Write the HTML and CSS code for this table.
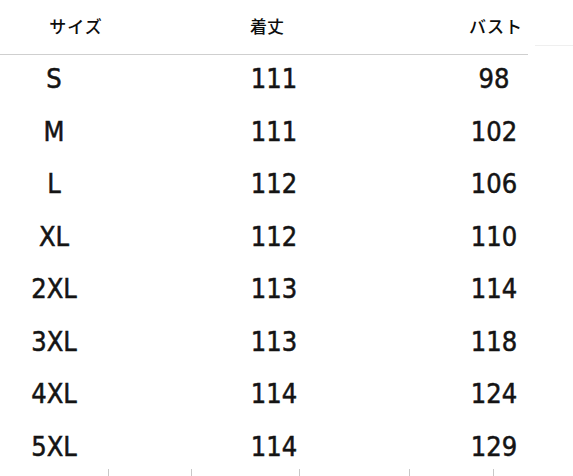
FILE: index.html
```html
<!DOCTYPE html>
<html lang="ja">
<head>
<meta charset="utf-8">
<link rel="stylesheet" href="styles.css">
</head>
<body>
<div class="sheet">
  <div class="head">
    <div class="hcell h1 kana">サイズ</div>
    <div class="hcell h2">着丈</div>
    <div class="hcell h3 kana">バスト</div>
  </div>
  <div class="head-fade"></div>
  <div class="rows">
    <div class="row"><span>S</span><span>111</span><span>98</span></div>
    <div class="row"><span>M</span><span>111</span><span>102</span></div>
    <div class="row"><span>L</span><span>112</span><span>106</span></div>
    <div class="row"><span>XL</span><span>112</span><span>110</span></div>
    <div class="row"><span>2XL</span><span>113</span><span>114</span></div>
    <div class="row"><span>3XL</span><span>113</span><span>118</span></div>
    <div class="row"><span>4XL</span><span>114</span><span>124</span></div>
    <div class="row"><span>5XL</span><span>114</span><span>129</span></div>
  </div>
  <div class="ticks">
    <i class="t1"></i><i class="t2"></i><i class="t3"></i><i class="t4"></i><i class="t5"></i>
  </div>
</div>
</body>
</html>
```

FILE: styles.css
```css
html, body {
  margin: 0;
  padding: 0;
  background: #ffffff;
}

.sheet {
  position: relative;
  width: 573px;
  height: 476px;
  overflow: hidden;
  background: #ffffff;
}

.head {
  display: grid;
  grid-template-columns: 152px 230px 1fr;
  height: 54px;
  width: 528px;
  border-bottom: 1px solid #cfcfcf;
  font-family: "Noto Sans CJK JP", sans-serif;
  font-size: 17px;
  font-weight: 500;
  color: #0d0d0d;
}

.hcell {
  display: flex;
  align-items: center;
  justify-content: center;
  padding-bottom: 4px;
}

.kana {
  letter-spacing: 1px;
}

.h3 {
  justify-content: flex-end;
  padding-right: 5px;
}

.head-fade {
  position: absolute;
  left: 535px;
  top: 45px;
  width: 38px;
  height: 1px;
  background: #efefef;
}

.rows {
  display: flex;
  flex-direction: column;
}

.row {
  display: grid;
  grid-template-columns: 108px 332px 108px 1fr;
  height: 52.5px;
  padding-bottom: 5px;
  box-sizing: border-box;
  align-items: center;
  font-family: "DejaVu Sans Condensed", "DejaVu Sans", sans-serif;
  font-stretch: condensed;
  font-size: 27px;
  color: #141414;
  -webkit-text-stroke: 0.5px #141414;
}

.row span {
  text-align: center;
  line-height: 1;
}

.ticks {
  position: absolute;
  left: 0;
  bottom: 0;
  width: 573px;
  height: 7px;
}

.ticks i {
  position: absolute;
  bottom: 0;
  width: 1px;
  height: 7px;
  background: #c8c8c8;
}

.t1 { left: 108px; }
.t2 { left: 191px; }
.t3 { left: 299px; }
.t4 { left: 409px; }
.t5 { left: 493px; }
```
